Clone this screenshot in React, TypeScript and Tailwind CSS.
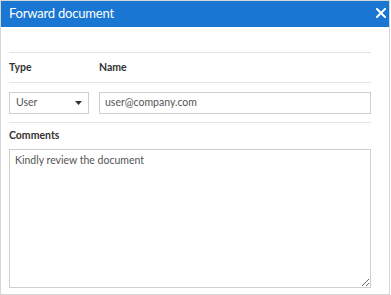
import React from "react";

export default function App() {
  const font = { fontFamily: "Lato, 'Noto Sans', sans-serif" };
  return (
    <div className="w-[391px] h-[295px] bg-white" style={font}>
      <div className="w-[390px] h-[295px] border border-[#d6d6d6] flex flex-col">
        <div className="h-[26px] bg-[#1976d2] flex items-center justify-between pl-[8px] pr-[3px] shrink-0">
          <span className="text-white text-[13px] leading-none mb-[2px] tracking-[-0.2px]">Forward document</span>
          <svg width="10" height="10" viewBox="0 0 10 10" className="mb-[3px]">
            <path d="M1 1 L9 9 M9 1 L1 9" stroke="white" strokeWidth="2" strokeLinecap="square" />
          </svg>
        </div>
        <div className="pl-[8px] pr-[18px] pt-[25px] flex flex-col">
          <div className="border-t border-[#e3e3e3] h-[30px] flex items-center text-[10.5px] font-bold text-[#333]">
            <span className="w-[90px]">Type</span>
            <span>Name</span>
          </div>
          <div className="border-t border-b border-[#e3e3e3] h-[41px] flex items-center">
            <div className="w-[80px] h-[22px] border border-[#cfcfcf] flex items-center justify-between pl-[6px] pr-[6px] text-[10.5px] text-[#555]">
              <span>User</span>
              <svg width="7" height="4" viewBox="0 0 7 4">
                <path d="M0 0 L7 0 L3.5 4 Z" fill="#333" />
              </svg>
            </div>
            <div className="ml-[10px] flex-1 h-[22px] border border-[#cfcfcf] flex items-center pl-[5px] text-[10.5px] text-[#555]">
              user@company.com
            </div>
          </div>
          <div className="h-[26px] flex items-center text-[10.5px] font-bold text-[#333]">Comments</div>
          <textarea
            className="h-[139px] border border-[#cfcfcf] px-[5px] py-[2px] text-[10.5px] leading-[16px] text-[#555] outline-none resize"
            defaultValue="Kindly review the document"
            style={font}
          />
        </div>
      </div>
    </div>
  );
}
